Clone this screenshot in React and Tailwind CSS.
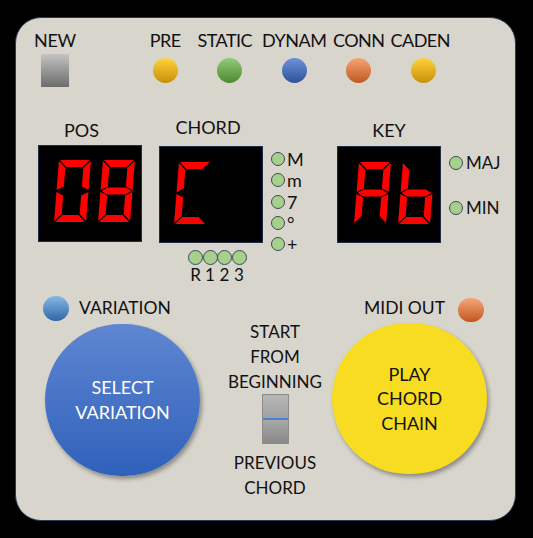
import React from "react";

const SEGS = (W, H, t) => ({
  a: [[1, 0], [W - 1, 0], [W - 1 - t, t], [1 + t, t]],
  f: [[0, 1], [t, 1 + t], [t, H / 2 - t / 2 - 1], [0, H / 2 - 1]],
  b: [[W, 1], [W - t, 1 + t], [W - t, H / 2 - t / 2 - 1], [W, H / 2 - 1]],
  g: [[1, H / 2], [t, H / 2 - t / 2], [W - t, H / 2 - t / 2], [W - 1, H / 2], [W - t, H / 2 + t / 2], [t, H / 2 + t / 2]],
  e: [[0, H / 2 + 1], [t, H / 2 + t / 2 + 1], [t, H - 1 - t], [0, H - 1]],
  c: [[W, H / 2 + 1], [W - t, H / 2 + t / 2 + 1], [W - t, H - 1 - t], [W, H - 1]],
  d: [[1, H], [1 + t, H - t], [W - 1 - t, H - t], [W - 1, H]],
});

const GLYPHS = {
  "0": "abcdef",
  "8": "abcdefg",
  C: "adef",
  A: "abcefg",
  b: "cdefg",
};

function Digit({ ch, x, y }) {
  const W = 32, H = 62, t = 7;
  const segs = SEGS(W, H, t);
  const on = GLYPHS[ch];
  const k = 5 / H;
  const ang = (Math.atan(k) * 180) / Math.PI;
  return (
    <g transform={`translate(${x + k * H} ${y}) skewX(${-ang})`}>
      {on.split("").map((s) => (
        <polygon key={s} points={segs[s].map((p) => p.join(",")).join(" ")} fill="#ff0000" />
      ))}
    </g>
  );
}

function Display({ chars }) {
  return (
    <div className="w-[104px] h-[97px] bg-black border border-[#1f2d4a]">
      <svg width="102" height="95" viewBox="0 0 102 95">
        {chars.map((c, i) => (
          <Digit key={i} ch={c.ch} x={c.x} y={c.y} />
        ))}
      </svg>
    </div>
  );
}

function Led({ className = "" }) {
  return <div className={"w-[14px] h-[14px] rounded-full bg-[#a8d08d] border-[1.5px] border-[#3b4a5e] " + className} />;
}

export default function App() {
  return (
    <div className="w-[533px] h-[538px] bg-black overflow-hidden pl-[15px] pt-[17px]" style={{ fontFamily: "Lato, 'Open Sans', sans-serif" }}>
      <div className="w-[501px] h-[504px] rounded-[26px] bg-[#d8d5cd] border border-[#2c3a55] pt-[12px] text-[#111]">
        {/* Row 1 */}
        <div className="flex pl-[14px]">
          <div className="w-[50px] flex flex-col items-center">
            <div className="text-[18px] leading-[20px] tracking-[-0.3px]">NEW</div>
            <div className="mt-[4px] w-[28px] h-[33px] bg-gradient-to-b from-[#c4c4c4] to-[#6c6c6c]" />
          </div>
          <div className="ml-[53px] flex">
            {[
              ["PRE", "from-[#ffd23a] to-[#c79000]", ""],
              ["STATIC", "from-[#94c97a] to-[#4d8a2e]", "-translate-x-[5px]"],
              ["DYNAM", "from-[#6f93da] to-[#2e519c]", ""],
              ["CONN", "from-[#f5a472] to-[#c1581c]", ""],
              ["CADEN", "from-[#ffd23a] to-[#c79000]", "-translate-x-[3px]"],
            ].map(([label, grad, shift]) => (
              <div key={label} className="w-[64.5px] flex flex-col items-center">
                <div className={"text-[18px] leading-[20px] tracking-[-0.5px] whitespace-nowrap " + shift}>{label}</div>
                <div className={"mt-[8px] w-[25px] h-[25px] rounded-full bg-gradient-to-b " + grad} />
              </div>
            ))}
          </div>
        </div>

        {/* Row 2 */}
        <div className="mt-[30px] h-[172px] flex items-start pl-[22px]">
          <div className="w-[104px] flex flex-col">
            <div className="mt-[3px] text-[18px] leading-[20px] text-center pr-[17px]">POS</div>
            <div className="mt-[5px]">
              <Display chars={[{ ch: "0", x: 15, y: 14 }, { ch: "8", x: 59, y: 14 }]} />
            </div>
          </div>
          <div className="ml-[17px] w-[104px] flex flex-col">
            <div className="text-[18px] leading-[20px] text-center pr-[6px]">CHORD</div>
            <div className="mt-[9px]">
              <Display chars={[{ ch: "C", x: 14, y: 15 }]} />
            </div>
            <div className="mt-[7px] ml-[29px] flex">
              {["R", "1", "2", "3"].map((l, i) => (
                <div key={l} className={"flex flex-col items-center w-[15px] " + (i > 0 ? "-ml-[0.5px]" : "")}>
                  <div className="w-[15px] h-[15px] rounded-full bg-[#a8d08d] border-[1.5px] border-[#3b4a5e]" />
                  <div className="text-[17px] leading-[20px]">{l}</div>
                </div>
              ))}
            </div>
          </div>
          <div className="ml-[8px] w-[66px] mt-[35px] flex flex-col">
            {["M", "m", "7", "°", "+"].map((l) => (
              <div key={l} className="h-[21.25px] flex items-start">
                <Led />
                <div className="ml-[2px] text-[18px] leading-[14px]">{l}</div>
              </div>
            ))}
          </div>
          <div className="w-[104px] flex flex-col">
            <div className="mt-[3px] text-[18px] leading-[20px] text-center">KEY</div>
            <div className="mt-[6px]">
              <Display chars={[{ ch: "A", x: 16, y: 15 }, { ch: "b", x: 60, y: 15 }]} />
            </div>
          </div>
          <div className="ml-[8px] mt-[39px] flex flex-col">
            <div className="flex items-center h-[14px]">
              <Led />
              <div className="ml-[3px] text-[17px] leading-[14px]">MAJ</div>
            </div>
            <div className="flex items-center h-[14px] mt-[31px]">
              <Led />
              <div className="ml-[3px] text-[17px] leading-[14px]">MIN</div>
            </div>
          </div>
        </div>

        {/* Row 3 */}
        <div className="flex pl-[27px]">
          <div className="w-[175px] flex flex-col">
            <div className="mt-[7px] flex items-center h-[25px]">
              <div className="w-[26px] h-[25px] rounded-full bg-gradient-to-b from-[#86b8e6] to-[#2e68a6]" />
              <div className="ml-[10px] text-[17.5px] leading-[20px] -mt-[2px]">VARIATION</div>
            </div>
            <div className="mt-[3px] ml-[2px] w-[155px] h-[152px] rounded-full bg-gradient-to-b from-[#5f86d1] to-[#2f61bb] shadow-[2px_3px_4px_rgba(0,0,0,0.35)] flex flex-col items-center justify-center text-white text-[18px] leading-[25px]">
              <div>SELECT</div>
              <div>VARIATION</div>
            </div>
          </div>
          <div className="w-[114px] flex flex-col items-center text-[17px] leading-[25px]">
            <div className="mt-[30px]">START</div>
            <div>FROM</div>
            <div>BEGINNING</div>
            <div className="w-[27px] h-[50px] border border-[#8c8c8c] flex flex-col">
              <div className="flex-1 bg-gradient-to-b from-[#b6b6b6] to-[#a2a2a2]" />
              <div className="h-[1.5px] bg-[#4a7fd8]" />
              <div className="flex-1 bg-gradient-to-b from-[#a8a8a8] to-[#898989]" />
            </div>
            <div className="mt-[6px]">PREVIOUS</div>
            <div>CHORD</div>
          </div>
          <div className="w-[155px] flex flex-col">
            <div className="mt-[9px] h-[24px] flex items-center pl-[32px]">
              <div className="text-[17.5px] leading-[20px] -mt-[5px]">MIDI OUT</div>
              <div className="ml-[13px] w-[26px] h-[24px] rounded-full bg-gradient-to-b from-[#f5a878] to-[#c0561a]" />
            </div>
            <div className="mt-[1px] w-[155px] h-[151px] rounded-full bg-[#f7dc22] shadow-[2px_3px_4px_rgba(0,0,0,0.35)] flex flex-col items-center justify-center text-[18px] leading-[24.5px] text-[#141414]">
              <div>PLAY</div>
              <div>CHORD</div>
              <div>CHAIN</div>
            </div>
          </div>
        </div>
      </div>
    </div>
  );
}
